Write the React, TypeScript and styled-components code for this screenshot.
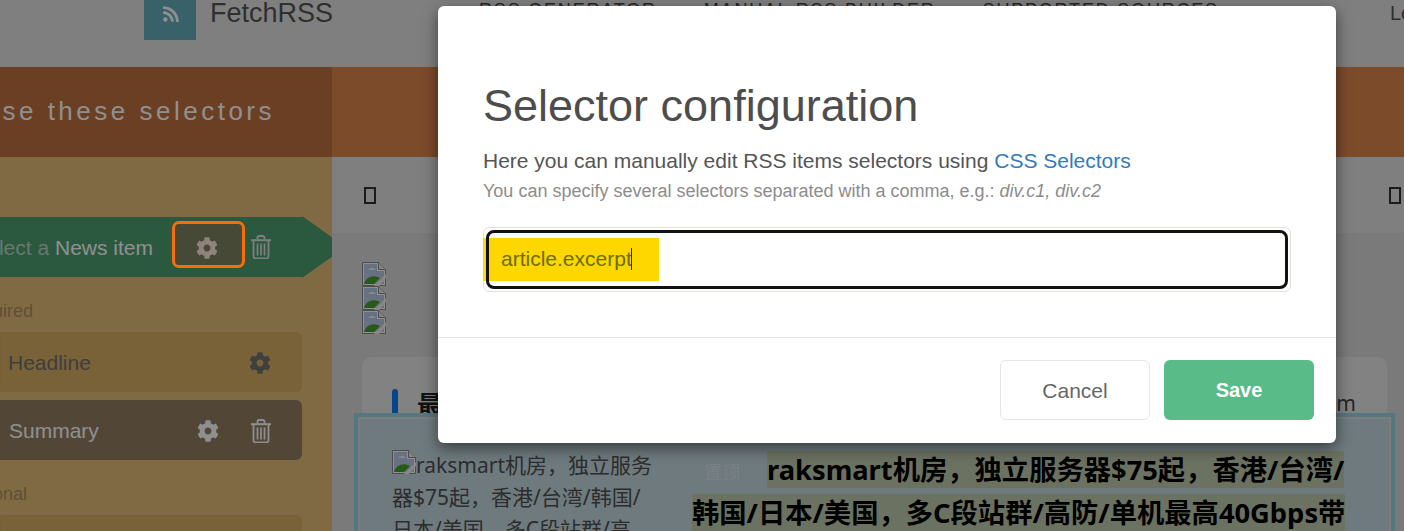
import React from 'react';
import styled, { createGlobalStyle } from 'styled-components';
import { FaCog, FaRss } from 'react-icons/fa';

const GlobalStyle = createGlobalStyle`
	html, body {
		margin: 0;
		padding: 0;
		background: #fff;
		font-family: "Liberation Sans", Arial, sans-serif;
		overflow: hidden;
	}
`;

const Page = styled('div')`
	position: relative;
	width: 1404px;
	height: 531px;
	overflow: hidden;
	background: #e3e3e3;
`;

const Nav = styled('div')`
	display: flex;
	height: 67px;
	align-items: flex-start;
	padding-left: 144px;
	background: #e3e3e3;
`;

const LogoBox = styled('div')`
	width: 52px;
	height: 40px;
	box-sizing: border-box;
	padding: 0 0 13px 1px;
	display: flex;
	align-items: center;
	justify-content: center;
	background: #67aebc;
	color: #fff;
	font-size: 18px;
`;

const LogoText = styled('div')`
	margin: -2px 0 0 14px;
	font-size: 27px;
	line-height: 30px;
	color: #555;
`;

const NavLinks = styled('div')`
	display: flex;
	gap: 47px;
	margin: 0 0 0 146px;
	font-size: 18px;
	line-height: 20px;
	letter-spacing: 1.8px;
	color: #444;
`;

const Login = styled('div')`
	margin: 2px 0 0 auto;
	width: 14px;
	overflow: hidden;
	font-size: 20px;
	line-height: 22px;
	color: #555;
`;

const Hero = styled('div')`
	display: grid;
	grid-template-columns: 332px 1fr;
	height: 90px;
	background: #dd864b;
`;

const HeroTitle = styled('div')`
	display: flex;
	align-items: center;
	justify-content: flex-end;
	padding: 0 57px 2px 0;
	background: #bf7040;
	color: #fff;
	font-size: 26px;
	letter-spacing: 3.5px;
	white-space: nowrap;
	overflow: hidden;
`;

const Columns = styled('div')`
	display: grid;
	grid-template-columns: 332px 1fr;
	height: 374px;
`;

const Sidebar = styled('div')`
	padding-top: 60px;
	background: #e4bd79;
	overflow: hidden;
`;

const StepBar = styled('div')`
	position: relative;
	display: flex;
	align-items: center;
	justify-content: flex-end;
	box-sizing: border-box;
	width: 302px;
	height: 60px;
	padding-right: 31px;
	background: #4c9f73;
	color: #fff;
	font-size: 21px;
	white-space: nowrap;

	&::after {
		content: '';
		position: absolute;
		left: 302px;
		top: -1px;
		border-left: 44px solid #4c9f73;
		border-top: 31px solid transparent;
		border-bottom: 31px solid transparent;
	}
`;

const StepLabel = styled('div')`
	flex: none;
	margin: 2px 19px 0 0;
	color: #bcd6c6;

	b {
		font-weight: normal;
		color: #fff;
	}
`;

const GearFrame = styled('div')`
	position: relative;
	display: flex;
	flex: none;
	align-items: center;
	justify-content: center;
	width: 73px;
	height: 47px;
	margin-bottom: 5px;
	box-sizing: border-box;
	padding: 7px 3px 0 0;
	border-radius: 6px;
	background: #7d8360;
	color: #fde9e2;
	font-size: 22px;
`;

/* the tour highlight sits above the backdrop, so it keeps its full colour */
const FocusRing = styled('span')`
	position: absolute;
	inset: 0;
	z-index: 2;
	box-sizing: border-box;
	border: 3px solid #f56e0a;
	border-radius: 7px;
`;

const StepTrash = styled('div')`
	display: flex;
	justify-content: flex-end;
	flex: none;
	width: 26px;
	color: #e0e0e0;
`;

const IconSlot = styled('div')<{ $dark?: boolean }>`
	display: flex;
	align-items: center;
	justify-content: center;
	width: 53px;
	flex: none;
	font-size: 22px;
	color: ${props => (props.$dark ? '#707070' : '#fff')};
`;

const GroupLabel = styled('div')`
	margin: 24px 0 0 -40px;
	height: 20px;
	font-size: 18px;
	line-height: 20px;
	color: #a88d5f;
`;

const Field = styled('div')<{ $filled?: boolean }>`
	display: flex;
	align-items: center;
	width: 302px;
	height: 60px;
	margin-top: ${props => (props.$filled ? '8px' : '11px')};
	box-sizing: border-box;
	padding: 2px 15px 0 ${props => (props.$filled ? '9px' : '7px')};
	border-radius: 0 6px 6px 0;
	font-size: 21px;
	color: ${props => (props.$filled ? '#fff' : '#707070')};
	background: ${props => (props.$filled ? '#927f62' : '#daaf64')};
	border: ${props => (props.$filled ? 'none' : '1px solid #d6aa60')};
`;

const FieldName = styled('div')`
	flex: 1;
`;

const Main = styled('div')`
	background: #dadada;
	overflow: hidden;
`;

const Toolbar = styled('div')`
	display: flex;
	align-items: center;
	justify-content: space-between;
	height: 76px;
	box-sizing: border-box;
	padding: 0 3px 0 32px;
	background: #e3e3e3;
`;

const Glyph = styled('span')`
	display: block;
	width: 12px;
	height: 17px;
	box-sizing: border-box;
	border: 2px solid #333;
`;

const BrokenStack = styled('div')`
	display: flex;
	flex-direction: column;
	margin: 29px 0 0 30px;
	height: 72px;
`;

const BrokenImg = styled('svg')`
	display: block;
	flex: none;
	width: 24px;
	height: 24px;
`;

const Card = styled('div')`
	position: relative;
	margin: 23px 17px 0 30px;
	height: 300px;
	border-radius: 10px;
	background: #e8e8e8;
`;

const CardHead = styled('div')`
	display: flex;
	align-items: center;
	height: 92px;
	padding-left: 30px;
	font-size: 26px;
	font-weight: bold;
	color: #222;
	font-family: "Noto Sans CJK SC", sans-serif;
`;

const Accent = styled('span')`
	width: 6px;
	height: 28px;
	margin-right: 19px;
	border-radius: 3px;
	background: #0a7ef0;
`;

const MetaTail = styled('span')`
	margin: 0 31px 0 auto;
	font-family: "Noto Sans", sans-serif;
	font-size: 21px;
	font-weight: normal;
	color: #444;
`;

const Highlight = styled('div')`
	position: absolute;
	top: 56px;
	left: -8px;
	right: -8px;
	height: 300px;
	display: grid;
	grid-template-columns: 262px 1fr;
	gap: 38px;
	box-sizing: border-box;
	padding: 32px 34px 0 34px;
	border: 4px solid #98d4e4;
	background: #c4dae1;
	box-shadow: inset 0 0 0 2px #dedede;
	font-family: "Noto Sans", "Noto Sans CJK SC", sans-serif;
`;

const Excerpt = styled('div')`
	font-size: 21px;
	line-height: 32px;
	color: #505050;
`;

const InlineBroken = styled('svg')`
	width: 24px;
	height: 24px;
	vertical-align: -1px;
`;

const PostTitle = styled('div')`
	font-size: 27.3px;
	line-height: 41px;
	font-weight: bold;
	color: #000;
`;

const Pin = styled('span')`
	margin: 0 27px 0 12px;
	font-family: "Noto Sans CJK SC", sans-serif;
	font-size: 18px;
	font-weight: normal;
	vertical-align: 1px;
	color: #dbe6e9;
`;

const Marked = styled('mark')`
	background: #c1ccaf;
	color: #000;
`;

const Overlay = styled('div')`
	position: absolute;
	inset: 0;
	background: rgba(0, 0, 0, 0.44);
`;

const Modal = styled('div')`
	position: absolute;
	left: 438px;
	top: 6px;
	width: 898px;
	height: 437px;
	border-radius: 6px;
	background: #fff;
	box-shadow: 0 5px 15px rgba(0, 0, 0, 0.5);
`;

const ModalBody = styled('div')`
	height: 332px;
	box-sizing: border-box;
	padding: 71px 45px 0;
	border-bottom: 1px solid #e5e5e5;
`;

const ModalTitle = styled('h1')`
	margin: 0;
	font-size: 45px;
	line-height: 58px;
	font-weight: normal;
	color: #4d4d4d;
`;

const ModalLead = styled('p')`
	margin: 13px 0 0;
	font-size: 21px;
	line-height: 26px;
	color: #555;

	a {
		color: #337ab7;
		text-decoration: none;
	}
`;

const ModalHint = styled('p')`
	margin: 6px 0 0;
	font-size: 18px;
	line-height: 22px;
	color: #8c8c8c;
`;

const InputWrap = styled('div')`
	position: relative;
	display: flex;
	margin-top: 25px;
	height: 65px;
	box-sizing: border-box;
	padding: 2px;
	border: 1px solid #e1e1d8;
	border-radius: 6px;
`;

const InputBox = styled('div')`
	position: relative;
	flex: 1;
	border: 3px solid #111;
	border-radius: 8px;
`;

const SelectedMark = styled('div')`
	position: absolute;
	left: -1px;
	top: 10px;
	display: flex;
	align-items: center;
	width: 176px;
	height: 43px;
	box-sizing: border-box;
	padding: 0 0 2px 18px;
	background: #ffd700;
	color: #6c6c00;
	font-size: 21px;
`;

const Caret = styled('span')`
	display: inline-block;
	width: 1px;
	height: 22px;
	margin-left: -1px;
	background: #222;
`;

const ModalFooter = styled('div')`
	display: flex;
	justify-content: flex-end;
	gap: 14px;
	padding: 22px 22px 0 0;
`;

const Button = styled('button')<{ $primary?: boolean }>`
	width: 150px;
	height: 60px;
	box-sizing: border-box;
	padding-top: ${props => (props.$primary ? '1px' : '2px')};
	border-radius: 6px;
	border: ${props => (props.$primary ? 'none' : '1px solid #e6e6e6')};
	background: ${props => (props.$primary ? '#58bb88' : '#fff')};
	color: ${props => (props.$primary ? '#fff' : '#666')};
	font-family: inherit;
	font-size: ${props => (props.$primary ? '20px' : '21px')};
	font-weight: ${props => (props.$primary ? 'bold' : 'normal')};
`;

const TrashIcon = () => (
	<svg width="20" height="24" viewBox="0 0 20 24" fill="none" stroke="currentColor">
		<path d="M6.5 4.5V2.6Q6.5 1 8 1h4q1.500 0 1.500 1.600V4.500" strokeWidth="1.800" />
		<path d="M0 5.200h20" strokeWidth="2" />
		<path d="M2.500 6v15.500q0 1.800 2 1.800h11q2 0 2-1.800V6" strokeWidth="1.800" />
		<path d="M6.500 8.500v12M10 8.500v12M13.500 8.500v12" strokeWidth="1.700" />
	</svg>
);

const BrokenIcon = () => (
	<>
		<path d="M.5.500h16l7 7v16H.5z" fill="#fff" stroke="#8a8a8a" />
		<path d="M16.500.500v7h7" fill="#e8e8e8" stroke="#8a8a8a" />
		<path d="M2 2h13v7h7v13H2z" fill="#b9c9e8" />
		<path d="M6 8c2-3 6-3 8 0z" fill="#eef2f8" />
		<path d="M2 22c2-7 9-10 16-6l-6 6z" fill="#45a32a" />
		<path d="M12 24l12-12v4L17 24z" fill="#f2f2f2" />
	</>
);

export default function App() {
	return (
		<Page>
			<GlobalStyle />
			<Nav>
				<LogoBox><FaRss /></LogoBox>
				<LogoText>FetchRSS</LogoText>
				<NavLinks>
					<span>RSS GENERATOR</span>
					<span>MANUAL RSS BUILDER</span>
					<span>SUPPORTED SOURCES</span>
				</NavLinks>
				<Login>Login</Login>
			</Nav>
			<Hero>
				<HeroTitle>Use these selectors</HeroTitle>
				<div />
			</Hero>
			<Columns>
				<Sidebar>
					<StepBar>
						<StepLabel>Select a <b>News item</b></StepLabel>
						<GearFrame><FaCog /><FocusRing /></GearFrame>
						<StepTrash><TrashIcon /></StepTrash>
					</StepBar>
					<GroupLabel>Required</GroupLabel>
					<Field>
						<FieldName>Headline</FieldName>
						<IconSlot $dark><FaCog /></IconSlot>
					</Field>
					<Field $filled>
						<FieldName>Summary</FieldName>
						<IconSlot><FaCog /></IconSlot>
						<IconSlot><TrashIcon /></IconSlot>
					</Field>
					<GroupLabel>Optional</GroupLabel>
					<Field />
				</Sidebar>
				<Main>
					<Toolbar><Glyph /><Glyph /></Toolbar>
					<BrokenStack>
						<BrokenImg viewBox="0 0 24 24"><BrokenIcon /></BrokenImg>
						<BrokenImg viewBox="0 0 24 24"><BrokenIcon /></BrokenImg>
						<BrokenImg viewBox="0 0 24 24"><BrokenIcon /></BrokenImg>
					</BrokenStack>
					<Card>
						<CardHead>
							<Accent />最新文章
							<MetaTail>m</MetaTail>
						</CardHead>
						<Highlight>
							<Excerpt>
								<InlineBroken viewBox="0 0 24 24"><BrokenIcon /></InlineBroken>
								raksmart机房，独立服务器$75起，香港/台湾/韩国/日本/美国，多C段站群/高防/单机最高40Gbps带宽
							</Excerpt>
							<PostTitle>
								<Pin>置顶</Pin>
								<Marked>raksmart机房，独立服务器$75起，香港/台湾/韩国/日本/美国，多C段站群/高防/单机最高40Gbps带宽</Marked>
							</PostTitle>
						</Highlight>
					</Card>
				</Main>
			</Columns>
			<Overlay>
				<Modal>
					<ModalBody>
						<ModalTitle>Selector configuration</ModalTitle>
						<ModalLead>Here you can manually edit RSS items selectors using <a href="#css">CSS Selectors</a></ModalLead>
						<ModalHint>You can specify several selectors separated with a comma, e.g.: <i>div.c1, div.c2</i></ModalHint>
						<InputWrap>
							<SelectedMark>article.excerpt<Caret /></SelectedMark>
							<InputBox />
						</InputWrap>
					</ModalBody>
					<ModalFooter>
						<Button>Cancel</Button>
						<Button $primary>Save</Button>
					</ModalFooter>
				</Modal>
			</Overlay>
		</Page>
	);
}
